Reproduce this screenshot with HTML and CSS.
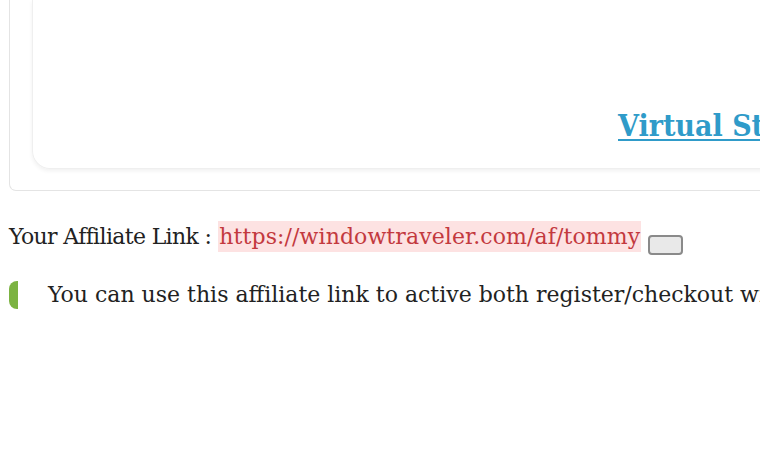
FILE: index.html
```html
<!DOCTYPE html>
<html>
<head>
<meta charset="utf-8">
<link rel="stylesheet" href="styles.css">
</head>
<body>
<div class="page">
  <div class="panel">
    <div class="card">
      <a class="store-link" href="#">Virtual Store</a>
    </div>
  </div>
  <p class="aff-line"><span class="aff-label">Your Affiliate Link :</span> <span class="aff-url">https://windowtraveler.com/af/tommy</span> <button class="copy-btn" type="button"></button></p>
  <div class="notice">You can use this affiliate link to active both register/checkout with this link.</div>
</div>
</body>
</html>
```
FILE: styles.css
```css
html, body {
  margin: 0;
  padding: 0;
  background: #ffffff;
  overflow: hidden;
}
.page {
  width: 760px;
  height: 452px;
  overflow: hidden;
  font-family: "DejaVu Serif", "Liberation Serif", serif;
  color: #222222;
}
.panel {
  margin-left: 9px;
  width: 1000px;
  height: 191px;
  box-sizing: border-box;
  border: 1px solid #e4e4e4;
  border-top: 0;
  border-radius: 0 0 0 7px;
  padding-left: 22px;
}
.card {
  width: 980px;
  height: 169px;
  box-sizing: border-box;
  border: 1px solid #efefef;
  border-top: 0;
  border-radius: 0 0 0 18px;
  box-shadow: 0 2px 4px rgba(0, 0, 0, 0.06);
  padding-left: 585px;
  padding-top: 108px;
  white-space: nowrap;
}
.store-link {
  font-family: "DejaVu Serif Condensed", "DejaVu Serif", serif;
  font-stretch: condensed;
  font-size: 30px;
  font-weight: bold;
  color: #2f9bc9;
  text-decoration: underline;
  text-underline-offset: 3px;
  text-decoration-thickness: 2px;
}
.aff-line {
  margin: 30px 0 0 9px;
  font-size: 22px;
  line-height: 32px;
  white-space: nowrap;
}
.aff-label {
  letter-spacing: -0.65px;
}
.aff-url {
  background: #fde2e2;
  color: #c3393e;
  padding: 3px 1px;
  letter-spacing: 0.1px;
}
.copy-btn {
  display: inline-block;
  width: 35px;
  height: 20px;
  margin: 0 0 0 0;
  padding: 0;
  vertical-align: -9px;
  background: #e9e9e9;
  border: 2px solid #8a8a8a;
  border-radius: 4px;
}
.notice {
  margin: 26px 0 0 9px;
  border-left: 9px solid #7cb342;
  border-radius: 8px 0 0 8px;
  padding-left: 30px;
  font-size: 22px;
  line-height: 28px;
  white-space: nowrap;
}
```
